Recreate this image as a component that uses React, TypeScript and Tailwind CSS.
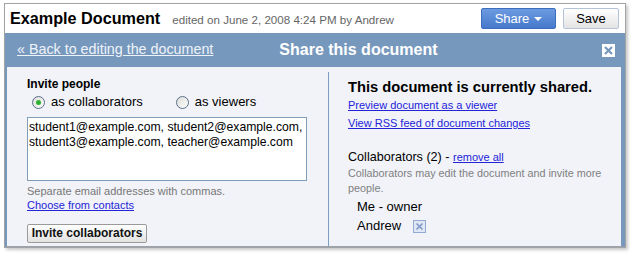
import React from "react";

const Radio = ({ checked, label }: { checked?: boolean; label: string }) => (
  <label className="flex items-center gap-[6px]">
    <span className="w-[13px] h-[13px] rounded-full border border-[#5b6f8a] bg-gradient-to-br from-[#dcdcd6] to-white flex items-center justify-center">
      {checked && <span className="w-[5px] h-[5px] rounded-full bg-[#2fb12f]" />}
    </span>
    <span className="text-[13px] leading-[16px] text-black">{label}</span>
  </label>
);

const SmallX = () => (
  <svg width="13" height="13" viewBox="0 0 13 13" className="block">
    <rect x="0.5" y="0.5" width="12" height="12" fill="#dfe7f4" stroke="#93aad3" />
    <path d="M3.5 3.5 L9.5 9.5 M9.5 3.5 L3.5 9.5" stroke="#7e98c9" strokeWidth="1.6" />
  </svg>
);

export default function App() {
  return (
    <div className="w-[631px] h-[255px] bg-white pt-[3px] pl-[4px] font-['Liberation_Sans',Arial,sans-serif]">
      <div className="w-[622px] h-[245px] border border-[#a3a3a3] shadow-[2px_2px_3px_rgba(0,0,0,0.22)] flex flex-col">
        {/* header */}
        <div className="h-[29px] shrink-0 bg-white flex items-center pl-[5px] pr-[6px]">
          <div className="flex items-baseline gap-[12px]">
            <span className="text-[16.2px] font-bold text-black">Example Document</span>
            <span className="text-[11.6px] text-[#666]">edited on June 2, 2008 4:24 PM by Andrew</span>
          </div>
          <div className="ml-auto flex items-center gap-[7px]">
            <button className="w-[75px] h-[21px] rounded-[2px] border border-[#3e6cbf] bg-gradient-to-b from-[#6d9be0] to-[#4679cc] text-white text-[13px] flex items-center justify-center gap-[5px]">
              Share
              <span className="w-0 h-0 border-l-[4px] border-r-[4px] border-t-[4px] border-l-transparent border-r-transparent border-t-white" />
            </button>
            <button className="w-[56px] h-[21px] rounded-[2px] border border-[#b4c2da] bg-gradient-to-b from-white to-[#e4e4e4] text-black text-[13px]">
              Save
            </button>
          </div>
        </div>

        {/* title bar */}
        <div className="h-[34px] shrink-0 bg-[#7798bd] flex items-center pl-[12px] pr-[10px]">
          <a className="text-[14.3px] text-[#eef3f9] underline">« Back to editing the document</a>
          <span className="ml-[66px] text-[16px] font-bold text-white">Share this document</span>
          <span className="ml-auto w-[13px] h-[13px] bg-white flex items-center justify-center">
            <svg width="11" height="11" viewBox="0 0 11 11">
              <path d="M2 2 L9 9 M9 2 L2 9" stroke="#7798bd" strokeWidth="2.2" />
            </svg>
          </span>
        </div>

        {/* body */}
        <div className="flex-1 flex bg-[#f1f3f8] border-l-[2px] border-r-[4px] border-[#7798bd] border-b border-b-[#9aa3ad]">
          <div className="w-[321px] pl-[20px] pt-[10px] flex flex-col">
            <div className="text-[12px] leading-[14px] font-bold text-black">Invite people</div>
            <div className="mt-[3px] ml-[5px] flex items-center gap-[33px]">
              <Radio checked label="as collaborators" />
              <Radio label="as viewers" />
            </div>
            <div className="mt-[7px] w-[280px] h-[64px] border border-[#7f9db9] bg-white px-[1px] py-[2px] text-[12.2px] leading-[15px] text-black whitespace-nowrap overflow-hidden">
              student1@example.com, student2@example.com,
              <br />
              student3@example.com, teacher@example.com
            </div>
            <div className="mt-[4px] text-[11px] leading-[13px] text-[#777]">Separate email addresses with commas.</div>
            <a className="mt-[1px] text-[11px] leading-[13px] text-[#2323d8] underline">Choose from contacts</a>
            <button className="mt-[12px] w-[120px] h-[19px] rounded-[2px] border border-[#9a9a9a] bg-gradient-to-b from-white to-[#e2e2e2] text-[12px] font-bold text-[#111] leading-[17px]">
              Invite collaborators
            </button>
          </div>

          <div className="mt-[5px] border-l border-[#7d9dc2] pl-[19px] pt-[6px] flex-1 flex flex-col">
            <div className="text-[14.7px] leading-[18px] font-bold text-black">This document is currently shared.</div>
            <a className="mt-[3px] text-[11px] leading-[13px] text-[#2323d8] underline">Preview document as a viewer</a>
            <a className="mt-[5px] text-[11px] leading-[13px] text-[#2323d8] underline">View RSS feed of document changes</a>
            <div className="mt-[20px] text-[12.6px] leading-[15px] text-black">
              Collaborators (2) - <a className="text-[11px] text-[#2323d8] underline">remove all</a>
            </div>
            <div className="mt-[1px] text-[10.8px] leading-[15px] text-[#808080] whitespace-nowrap">
              Collaborators may edit the document and invite more
              <br />
              people.
            </div>
            <div className="mt-[3px] ml-[9px] text-[13px] leading-[16px] text-black">Me - owner</div>
            <div className="mt-[3px] ml-[9px] flex items-center gap-[12px]">
              <span className="text-[13px] leading-[16px] text-black">Andrew</span>
              <SmallX />
            </div>
          </div>
        </div>
      </div>
    </div>
  );
}
